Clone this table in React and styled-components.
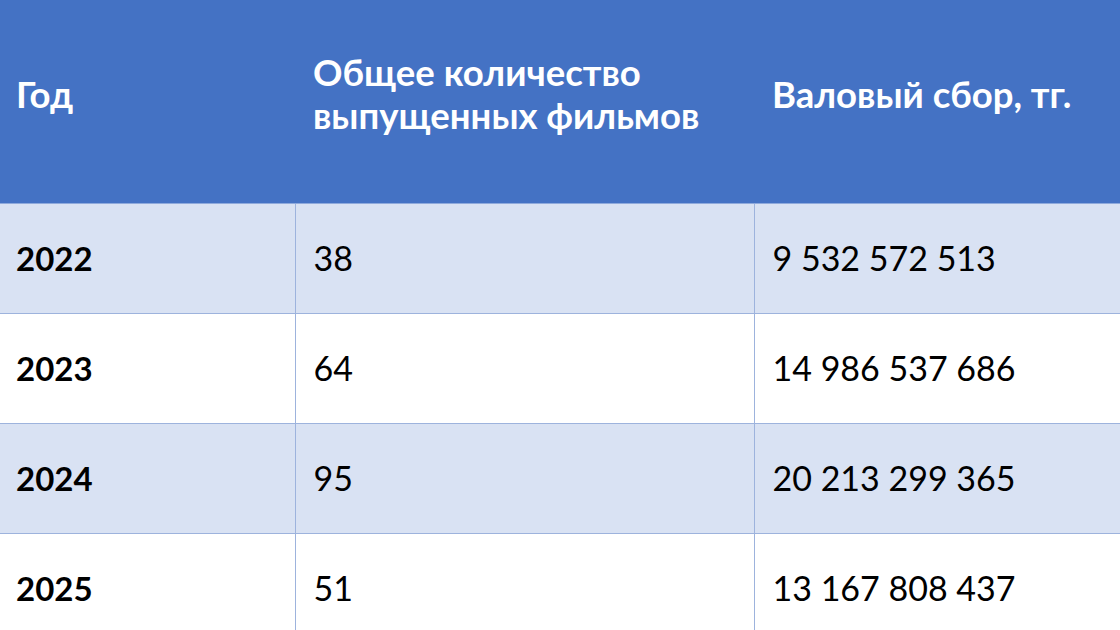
import React from 'react';
import styled, { createGlobalStyle } from 'styled-components';

const GlobalStyle = createGlobalStyle`
  html, body {
    margin: 0;
    padding: 0;
    background: #ffffff;
  }
  body {
    font-family: Lato, "Open Sans", "Liberation Sans", sans-serif;
  }
`;

const rows = [
  { year: '2022', count: '38', gross: '9 532 572 513' },
  { year: '2023', count: '64', gross: '14 986 537 686' },
  { year: '2024', count: '95', gross: '20 213 299 365' },
  { year: '2025', count: '51', gross: '13 167 808 437' },
];

export default function App() {
  return (
    <>
      <GlobalStyle />
      <PageSC>
        <TableSC>
          <colgroup>
            <col style={{ width: 295 }} />
            <col style={{ width: 459 }} />
            <col />
          </colgroup>
          <thead>
            <tr>
              <HeadCellSC>Год</HeadCellSC>
              <HeadCellSC>
                Общее количество
                <br />
                выпущенных фильмов
              </HeadCellSC>
              <HeadCellSC>Валовый сбор, тг.</HeadCellSC>
            </tr>
          </thead>
          <tbody>
            {rows.map((row, i) => (
              <RowSC key={row.year} striped={i % 2 === 0}>
                <CellSC bold>{row.year}</CellSC>
                <CellSC>{row.count}</CellSC>
                <CellSC>{row.gross}</CellSC>
              </RowSC>
            ))}
          </tbody>
        </TableSC>
      </PageSC>
    </>
  );
}

const PageSC = styled.div`
  width: 1120px;
  height: 630px;
  overflow: hidden;
  background: #ffffff;
`;

const TableSC = styled.table`
  width: 1120px;
  border-collapse: collapse;
  table-layout: fixed;
`;

const HeadCellSC = styled.th`
  box-sizing: border-box;
  height: 203px;
  padding: 0 18px 14px;
  background: #4472c4;
  color: #ffffff;
  font-size: 36.5px;
  font-weight: 700;
  line-height: 43px;
  text-align: left;
  vertical-align: middle;
  border-bottom: 1px solid #8faadc;

  &:first-child {
    padding-left: 16px;
  }
`;

const RowSC = styled('tr').withConfig({
  shouldForwardProp: (prop) => prop !== 'striped',
})`
  background: ${(props) => (props.striped ? '#d9e2f3' : '#ffffff')};
`;

const CellSC = styled('td').withConfig({
  shouldForwardProp: (prop) => prop !== 'bold',
})`
  box-sizing: border-box;
  height: 110px;
  padding: 0 18px;
  color: #000000;
  font-size: ${(props) => (props.bold ? '33px' : '34px')};
  font-weight: ${(props) => (props.bold ? 700 : 400)};
  line-height: 1;
  vertical-align: middle;
  border-bottom: 1px solid #9db3dd;
  border-left: 1px solid #9db3dd;

  &:first-child {
    border-left: none;
    padding-left: 16px;
  }
`;
